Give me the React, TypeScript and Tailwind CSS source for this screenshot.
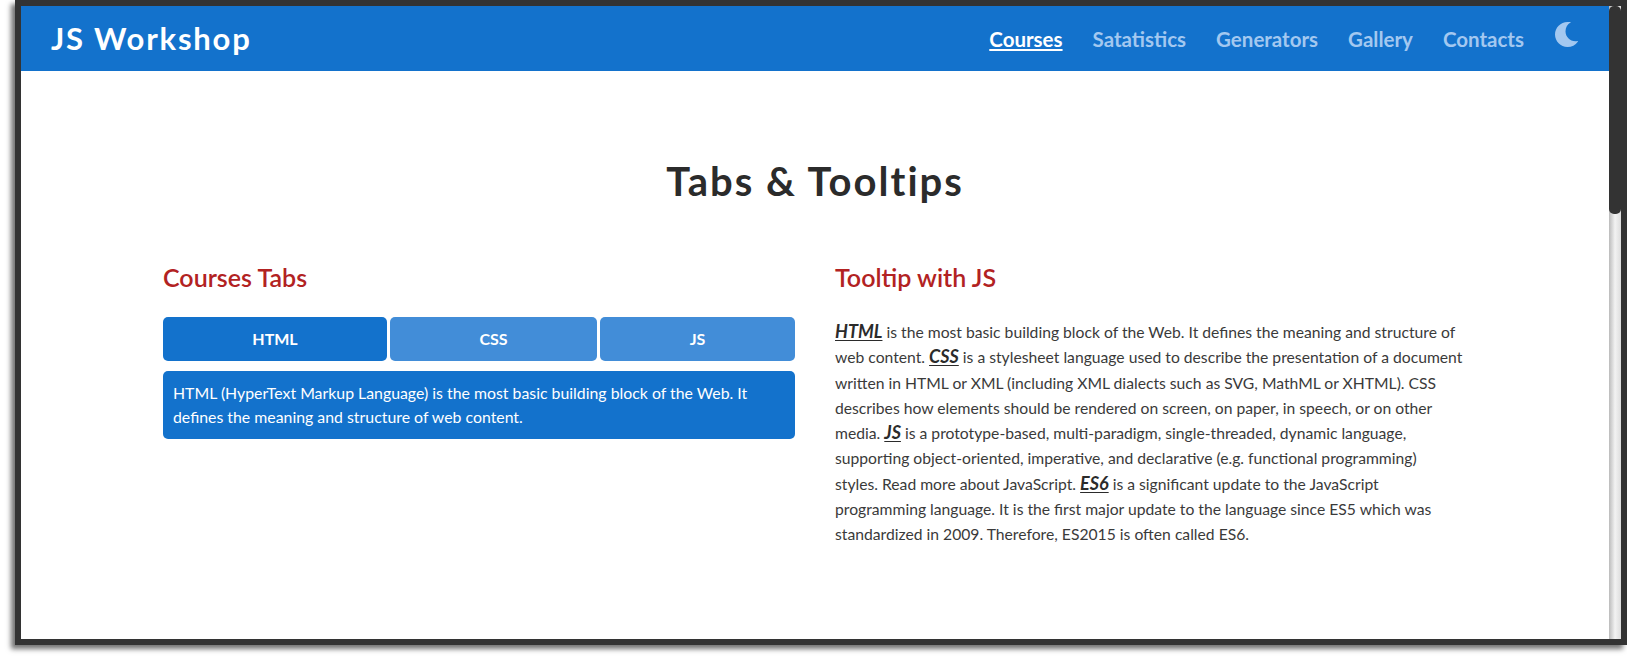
import { useState } from 'react';

const NAV_LINKS = ['Satatistics', 'Generators', 'Gallery', 'Contacts'];

const TABS = [
  { label: 'HTML', width: 'w-[224px]', text: 'HTML (HyperText Markup Language) is the most basic building block of the Web. It defines the meaning and structure of web content.' },
  { label: 'CSS', width: 'w-[207px]', text: 'CSS is a stylesheet language used to describe the presentation of a document written in HTML or XML.' },
  { label: 'JS', width: 'w-[195px]', text: 'JS is a prototype-based, multi-paradigm, single-threaded, dynamic language.' },
];

function Term({ children }: { children: string }) {
  return <span className="text-[18px] font-bold italic leading-none text-[#2b2b2b] underline underline-offset-2">{children}</span>;
}

function MoonIcon() {
  return (
    <svg viewBox="0 0 23 25" className="mb-[10px] ml-[1px] h-[25px] w-[23px] fill-[#a3c8f0]">
      <path d="M12.5 0C5.6 0 0 5.6 0 12.5S5.6 25 12.5 25c4.2 0 8-2 10.3-5.3.2-.3 0-.7-.4-.6-.7.1-1.3.2-2 .2-5.5 0-9.9-4.5-9.9-10 0-3.7 2-7 5-8.7.4-.2.3-.7-.1-.8-.8-.1-1.6-.3-2.4-.3z" />
    </svg>
  );
}

export default function App() {
  const [active, setActive] = useState(0);

  return (
    <div className="h-[661px] overflow-hidden bg-white pb-[16px] pl-[15px] font-['Lato','Noto_Sans',sans-serif]">
      <div className="flex h-[645px] border-[6px] border-[#333] shadow-[-4px_4px_5px_rgba(0,0,0,0.55)]">
        <div className="flex min-w-0 flex-1 flex-col bg-white">
          <header className="flex h-[65px] items-center justify-between bg-[#1372cc] pl-[30px] pr-[31px]">
            <div className="text-[31px] font-bold tracking-[1.8px] text-white">JS Workshop</div>
            <nav className="flex items-center gap-[30px] pt-[2px] text-[20.5px] font-bold text-[#a3c8f0]">
              <a className="text-white underline underline-offset-2">Courses</a>
              {NAV_LINKS.map((link) => (
                <a key={link}>{link}</a>
              ))}
              <MoonIcon />
            </nav>
          </header>

          <main className="flex-1 px-[142px]">
            <h1 className="mt-[80px] text-center text-[40px] font-bold leading-[60px] tracking-[2px] text-[#2b2b2b]">Tabs &amp; Tooltips</h1>
            <div className="mt-[48px] flex gap-[40px]">
              <section className="w-[632px]">
                <h2 className="text-[25px] font-semibold leading-[36px] text-[#b22222]">Courses Tabs</h2>
                <div className="mt-[22px] flex gap-[3px]">
                  {TABS.map((tab, i) => (
                    <button
                      key={tab.label}
                      type="button"
                      onClick={() => setActive(i)}
                      className={`h-[44px] rounded-[5px] text-[16px] font-bold text-white ${tab.width} ${i === active ? 'bg-[#1372cc]' : 'bg-[#428dd8]'}`}
                    >
                      {tab.label}
                    </button>
                  ))}
                </div>
                <div className="mt-[10px] rounded-[5px] bg-[#1372cc] px-[10px] py-[10px] text-[15.85px] leading-[24px] text-white">
                  {TABS[active].text}
                </div>
              </section>

              <section className="w-[632px]">
                <h2 className="text-[25px] font-semibold leading-[36px] text-[#b22222]">Tooltip with JS</h2>
                <p className="mt-[25px] text-[15.7px] leading-[25.3px] text-[#3a3a3a]">
                  <Term>HTML</Term> is the most basic building block of the Web. It defines the meaning and structure of web content.{' '}
                  <Term>CSS</Term> is a stylesheet language used to describe the presentation of a document written in HTML or XML (including XML dialects such as SVG, MathML or XHTML). CSS describes how elements should be rendered on screen, on paper, in speech, or on other media.{' '}
                  <Term>JS</Term> is a prototype-based, multi-paradigm, single-threaded, dynamic language, supporting object-oriented, imperative, and declarative (e.g. functional programming) styles.{'\u00a0'}Read more about JavaScript.{' '}
                  <Term>ES6</Term> is a significant update to the JavaScript programming language. It is the first major update to the language since ES5 which was standardized in 2009. Therefore, ES2015 is often called ES6.
                </p>
              </section>
            </div>
          </main>
        </div>

        {/* scrollbar */}
        <div className="w-[12px] shrink-0 bg-gradient-to-r from-[#bbb] via-[#f2f2f2] to-[#ddd]">
          <div className="h-[208px] rounded-[5px] bg-[#333]" />
        </div>
      </div>
    </div>
  );
}
